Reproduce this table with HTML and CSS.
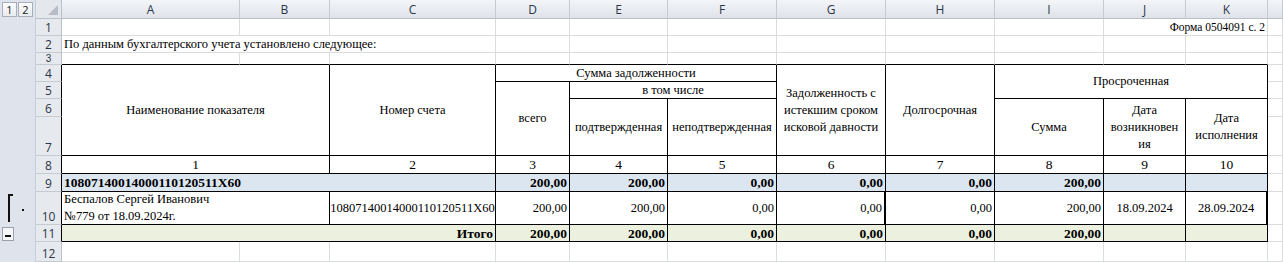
FILE: index.html
```html
<!DOCTYPE html>
<html lang="ru">

<head>
    <meta charset="UTF-8">
    <title>Форма 0504091 с. 2</title>
    <link rel="stylesheet" href="styles.css">
</head>

<body>
    <div class="sheet">
        <!-- заголовки столбцов -->
        <div class="ol"><span class="lvbtn">1</span><span class="lvbtn">2</span></div>
        <div class="corner">
            <svg width="12" height="12" viewBox="0 0 12 12"><polygon points="11,1 11,11 1,11" fill="#b6bcc5"/></svg>
        </div>
        <div class="ch">A</div>
        <div class="ch">B</div>
        <div class="ch">C</div>
        <div class="ch">D</div>
        <div class="ch">E</div>
        <div class="ch">F</div>
        <div class="ch">G</div>
        <div class="ch">H</div>
        <div class="ch">I</div>
        <div class="ch">J</div>
        <div class="ch">K</div>
        <div class="ch"></div>

        <div class="ol rows8"></div>

        <!-- 1 -->
        <div class="rh">1</div>
        <div class="c"></div><div class="c"></div><div class="c"></div><div class="c"></div>
        <div class="c"></div><div class="c"></div><div class="c"></div><div class="c"></div>
        <div class="c"></div>
        <div class="c span2 right small">Форма 0504091 с. 2</div>
        <div class="c"></div>

        <!-- 2 -->
        <div class="rh">2</div>
        <div class="c span3">По данным бухгалтерского учета установлено следующее:</div>
        <div class="c"></div><div class="c"></div><div class="c"></div><div class="c"></div>
        <div class="c"></div><div class="c"></div><div class="c"></div><div class="c"></div>
        <div class="c"></div>

        <!-- 3 -->
        <div class="rh short">3</div>
        <div class="c edge"></div><div class="c edge"></div><div class="c edge"></div><div class="c edge"></div>
        <div class="c edge"></div><div class="c edge"></div><div class="c edge"></div><div class="c edge"></div>
        <div class="c edge"></div><div class="c edge"></div><div class="c edge"></div>
        <div class="c"></div>

        <!-- 4 -->
        <div class="rh in">4</div>
        <div class="c t span2 rows4 mid"><span>Наименование показателя</span></div>
        <div class="c t rows4 mid"><span>Номер счета</span></div>
        <div class="c t span3 mid"><span>Сумма задолженности</span></div>
        <div class="c t rows4 mid"><span>Задолженность с<br>истекшим сроком<br>исковой давности</span></div>
        <div class="c t rows4 mid"><span>Долгосрочная</span></div>
        <div class="c t span3 rows2 mid"><span>Просроченная</span></div>
        <div class="c"></div>

        <!-- 5 -->
        <div class="rh in">5</div>
        <div class="c t rows3 mid"><span>всего</span></div>
        <div class="c t span2 mid"><span>в том числе</span></div>
        <div class="c"></div>

        <!-- 6 -->
        <div class="rh in">6</div>
        <div class="c t rows2 mid"><span>подтвержденная</span></div>
        <div class="c t rows2 mid"><span>неподтвержденная</span></div>
        <div class="c t rows2 mid"><span>Сумма</span></div>
        <div class="c t rows2 mid"><span>Дата<br>возникновен<br>ия</span></div>
        <div class="c t rows2 mid"><span>Дата<br>исполнения</span></div>
        <div class="c"></div>

        <!-- 7 -->
        <div class="rh in">7</div>
        <div class="c"></div>

        <!-- 8 -->
        <div class="rh in">8</div>
        <div class="c t span2 mid no">1</div>
        <div class="c t mid no">2</div>
        <div class="c t mid no">3</div>
        <div class="c t mid no">4</div>
        <div class="c t mid no">5</div>
        <div class="c t mid no">6</div>
        <div class="c t mid no">7</div>
        <div class="c t mid no">8</div>
        <div class="c t mid no">9</div>
        <div class="c t mid no">10</div>
        <div class="c"></div>

        <!-- 9: счет -->
        <div class="ol rows2">
            <div class="group"><i class="bracket"></i><i class="dot"></i></div>
        </div>
        <div class="rh in">9</div>
        <div class="c t span3 blue bold">10807140014000110120511X60</div>
        <div class="c t blue bold num">200,00</div>
        <div class="c t blue bold num">200,00</div>
        <div class="c t blue bold num">0,00</div>
        <div class="c t blue bold num">0,00</div>
        <div class="c t blue bold num">0,00</div>
        <div class="c t blue bold num">200,00</div>
        <div class="c t blue"></div>
        <div class="c t blue"></div>
        <div class="c"></div>

        <!-- 10: контрагент -->
        <div class="rh in">10</div>
        <div class="c t span2"><span>Беспалов Сергей Иванович<br>№779 от 18.09.2024г.</span></div>
        <div class="c t mid">10807140014000110120511X60</div>
        <div class="c t num">200,00</div>
        <div class="c t num">200,00</div>
        <div class="c t num">0,00</div>
        <div class="c t num thick">0,00</div>
        <div class="c t num">0,00</div>
        <div class="c t num">200,00</div>
        <div class="c t mid">18.09.2024</div>
        <div class="c t mid thick">28.09.2024</div>
        <div class="c"></div>

        <!-- 11: итог -->
        <div class="ol"><span class="minus"></span></div>
        <div class="rh in">11</div>
        <div class="c t span3 green bold num">Итого</div>
        <div class="c t green bold num">200,00</div>
        <div class="c t green bold num">200,00</div>
        <div class="c t green bold num">0,00</div>
        <div class="c t green bold num">0,00</div>
        <div class="c t green bold num">0,00</div>
        <div class="c t green bold num">200,00</div>
        <div class="c t green"></div>
        <div class="c t green"></div>
        <div class="c"></div>

        <!-- 12 -->
        <div class="ol"></div>
        <div class="rh">12</div>
        <div class="c"></div><div class="c"></div><div class="c"></div><div class="c"></div>
        <div class="c"></div><div class="c"></div><div class="c"></div><div class="c"></div>
        <div class="c"></div><div class="c"></div><div class="c"></div>
        <div class="c"></div>
    </div>
</body>

</html>
```

FILE: styles.css
```css
body {
    margin: 0;
    background: #fff;
    font-family: 'Liberation Serif', 'Times New Roman', serif;
}

.sheet {
    display: grid;
    grid-template-columns: 36px 26px 178px 90px 166px 74px 98px 109px 109px 109px 109px 82px 82px 15px;
    grid-template-rows: 19px 17px 17px 12px 17px 17px 18px 39px 18px 18px 33px 17px 20px;
    width: 1283px;
    height: 262px;
    overflow: hidden;
    font-size: 12.5px;
    color: #000;
}

.sheet > div {
    box-sizing: border-box;
    min-width: 0;
    display: flex;
    align-items: center;
}

/* панель группировки слева */
.ol {
    background: #dfe3eb;
    border-right: 1px solid #c9ced6;
    position: relative;
}

.lvbtn {
    width: 15px;
    height: 15px;
    margin-left: 2px;
    box-sizing: border-box;
    border: 1px solid #a9b0bb;
    background: linear-gradient(#fbfcfd, #e9ecf0);
    font: 11px 'Open Sans', sans-serif;
    line-height: 13px;
    text-align: center;
    color: #222;
}

.lvbtn + .lvbtn {
    margin-left: 1px;
}

.group {
    width: 100%;
    height: 100%;
}

.bracket {
    position: absolute;
    left: 8px;
    top: 20px;
    width: 5px;
    height: 28px;
    border-left: 2px solid #111;
    border-top: 2px solid #111;
    box-sizing: border-box;
}

.dot {
    position: absolute;
    left: 22px;
    top: 35px;
    width: 2px;
    height: 2px;
    background: #111;
}

.minus {
    width: 12px;
    height: 14px;
    margin-left: 2px;
    box-sizing: border-box;
    border: 1px solid #9aa2ad;
    background: #f4f6f8;
    position: relative;
}

.minus::after {
    content: '';
    position: absolute;
    left: 2px;
    right: 2px;
    top: 7px;
    height: 2px;
    background: #111;
}

/* заголовки строк и столбцов */
.corner {
    background: #e4e7ec;
    border-right: 1px solid #b9bfc8;
    border-bottom: 1px solid #b9bfc8;
    justify-content: flex-end;
    align-items: flex-end !important;
    padding: 0 2px 2px 0;
}

.ch {
    background: linear-gradient(#f3f5f8, #dfe3e9);
    border-right: 1px solid #c6cbd2;
    border-bottom: 1px solid #b9bfc8;
    justify-content: center;
    font: 12px 'Open Sans', sans-serif;
    color: #2b3648;
}

.rh {
    background: #e6e9ee;
    border-right: 1px solid #b9bfc8;
    border-bottom: 1px solid #c6cbd2;
    justify-content: center;
    align-items: flex-end !important;
    font: 12px/15px 'Open Sans', sans-serif;
    color: #2b3648;
    overflow: hidden;
}

.rh.in {
    border-right-color: #000;
}

.rh.short {
    font: 10px/11px 'Liberation Sans', sans-serif;
}

/* ячейки */
.c {
    border-right: 1px solid #dadcdd;
    border-bottom: 1px solid #dadcdd;
    padding: 0 2px;
    white-space: nowrap;
    line-height: 17px;
}

.c.edge {
    border-bottom-color: #000;
}

.c.t {
    border-right-color: #000;
    border-bottom-color: #000;
}

.c.thick {
    border-right-width: 2px;
}

.span2 { grid-column: span 2; }
.span3 { grid-column: span 3; }
.rows2 { grid-row: span 2; }
.rows3 { grid-row: span 3; }
.rows4 { grid-row: span 4; }
.rows8 { grid-row: span 8; }

.mid {
    justify-content: center;
    text-align: center;
}

.num,
.right {
    justify-content: flex-end;
}

.small {
    font-size: 11.5px;
}

.no {
    font-size: 13.5px;
}

.bold {
    font-weight: bold;
    font-size: 13.5px;
}

.blue {
    background: #dce6f1;
}

.green {
    background: #ebf1de;
}
```
